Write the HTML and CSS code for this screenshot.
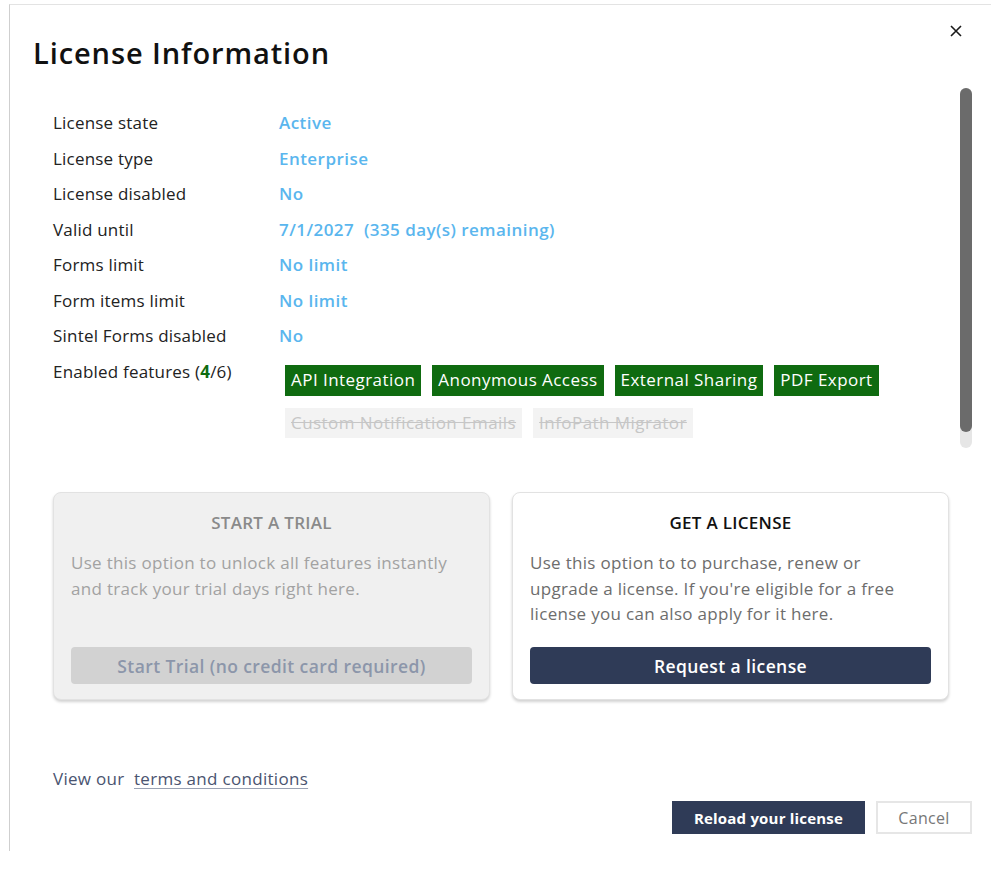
FILE: index.html
```html
<!DOCTYPE html>
<html lang="en">
<head>
  <meta charset="UTF-8">
  <title>License Information</title>
  <link rel="stylesheet" href="styles.css">
</head>
<body>
  <div class="dialog">
    <div class="dialog-header">
      <h1 class="dialog-title">License Information</h1>
      <button class="btn-close" title="Close">
        <svg width="12" height="12" viewBox="0 0 12 12"><path d="M1 1L11 11M11 1L1 11" stroke="#1a1a1a" stroke-width="1.6"/></svg>
      </button>
    </div>

    <div class="scroll-area">
      <div class="info-grid">
        <div class="info-label">License state</div>
        <div class="info-value">Active</div>
        <div class="info-label">License type</div>
        <div class="info-value">Enterprise</div>
        <div class="info-label">License disabled</div>
        <div class="info-value">No</div>
        <div class="info-label">Valid until</div>
        <div class="info-value">7/1/2027&nbsp; (335 day(s) remaining)</div>
        <div class="info-label">Forms limit</div>
        <div class="info-value">No limit</div>
        <div class="info-label">Form items limit</div>
        <div class="info-value">No limit</div>
        <div class="info-label">Sintel Forms disabled</div>
        <div class="info-value">No</div>
        <div class="info-label">Enabled features (<b class="count">4</b>/6)</div>
        <div class="features">
          <span class="tag tag-on">API Integration</span>
          <span class="tag tag-on">Anonymous Access</span>
          <span class="tag tag-on">External Sharing</span>
          <span class="tag tag-on">PDF Export</span>
          <span class="tag tag-off">Custom Notification Emails</span>
          <span class="tag tag-off">InfoPath Migrator</span>
        </div>
      </div>
      <div class="scrollbar">
        <div class="scroll-thumb"></div>
      </div>
    </div>

    <div class="options">
      <div class="option-card disabled">
        <div class="card-title">START A TRIAL</div>
        <p class="card-text">Use this option to unlock all features instantly and track your trial days right here.</p>
        <button class="card-btn btn-grey">Start Trial (no credit card required)</button>
      </div>
      <div class="option-card">
        <div class="card-title">GET A LICENSE</div>
        <p class="card-text">Use this option to to purchase, renew or upgrade a license. If you're eligible for a free license you can also apply for it here.</p>
        <button class="card-btn btn-navy">Request a license</button>
      </div>
    </div>

    <div class="terms">View our&nbsp; <a href="#">terms and conditions</a></div>

    <div class="dialog-footer">
      <button class="footer-btn btn-reload">Reload your license</button>
      <button class="footer-btn btn-cancel">Cancel</button>
    </div>
  </div>
</body>
</html>
```

FILE: styles.css
```css
* {
  margin: 0;
  padding: 0;
  box-sizing: border-box;
}

body {
  font-family: "Open Sans", "Noto Sans", sans-serif;
  background: #fff;
  color: #222;
}

.dialog {
  margin: 4px 0 0 9px;
  width: 982px;
  height: 847px;
  border-left: 1px solid #cfcfcf;
  border-top: 1px solid #e3e3e3;
  display: flex;
  flex-direction: column;
}

.dialog-header {
  display: flex;
  justify-content: space-between;
  align-items: flex-start;
  padding: 28px 29px 0 23px;
  height: 83px;
}

.dialog-title {
  font-size: 29px;
  font-weight: 600;
  color: #111;
  letter-spacing: 0.9px;
}

.btn-close {
  background: none;
  border: none;
  margin-top: -8px;
  cursor: pointer;
}

.scroll-area {
  display: flex;
  justify-content: space-between;
  height: 362px;
  padding-left: 43px;
}

.info-grid {
  display: grid;
  grid-template-columns: 226px 1fr;
  grid-auto-rows: 35.5px;
  padding-top: 17px;
  font-size: 17px;
  line-height: 35.5px;
}

.info-label {
  color: #222;
  letter-spacing: 0.2px;
}

.count {
  color: #0f6b10;
  font-weight: 700;
}

.info-value {
  color: #5ab6ee;
  font-weight: 600;
  letter-spacing: 0.45px;
}

.features {
  display: flex;
  flex-wrap: wrap;
  gap: 12px 11px;
  width: 620px;
  padding: 11px 0 0 6px;
  line-height: normal;
}

.tag {
  font-size: 17px;
  padding: 3px 6px;
  height: 31px;
  letter-spacing: 0.45px;
}

.tag-on {
  background: #0f6b10;
  color: #fff;
}

.tag-off {
  background: #f3f3f3;
  color: #c6c6c6;
  text-decoration: line-through;
  height: 30px;
}

.scrollbar {
  width: 12px;
  margin-right: 19px;
  background: #e6e6e6;
  border-radius: 6px;
  height: 360px;
}

.scroll-thumb {
  height: 344px;
  background: #6b6b6b;
  border-radius: 6px;
}

.options {
  display: grid;
  grid-template-columns: 437px 437px;
  gap: 22px;
  margin: 42px 0 0 43px;
}

.option-card {
  height: 208px;
  display: flex;
  flex-direction: column;
  padding: 19px 17px 15px;
  border: 1px solid #e2e2e2;
  border-radius: 8px;
  box-shadow: 0 2px 3px rgba(0, 0, 0, 0.18);
  background: #fff;
}

.option-card.disabled {
  background: #f0f0f0;
}

.card-title {
  text-align: center;
  font-size: 17px;
  font-weight: 600;
  line-height: 22px;
  color: #111;
  letter-spacing: 0.3px;
}

.disabled .card-title {
  color: #8a8a8a;
}

.card-text {
  margin-top: 16px;
  font-size: 17px;
  line-height: 25.5px;
  color: #6d6d6d;
  letter-spacing: 0.3px;
}

.disabled .card-text {
  color: #a2a2a2;
}

.card-btn {
  margin-top: auto;
  height: 37px;
  border: none;
  border-radius: 4px;
  font-family: inherit;
  font-size: 17.5px;
  font-weight: 600;
  letter-spacing: 0.4px;
}

.btn-grey {
  background: #d2d2d2;
  color: #8c96aa;
}

.btn-navy {
  background: #2f3b57;
  color: #fff;
}

.terms {
  margin: 67px 0 0 43px;
  font-size: 17px;
  color: #4a5470;
  letter-spacing: 0.3px;
}

.terms a {
  color: #4a5470;
  text-decoration-color: #9aa2b4;
  text-underline-offset: 3px;
}

.dialog-footer {
  display: flex;
  justify-content: flex-end;
  gap: 11px;
  margin-top: 11px;
  padding-right: 19px;
}

.footer-btn {
  height: 33px;
  font-family: inherit;
  font-size: 15px;
  letter-spacing: 0.2px;
}

.btn-reload {
  width: 193px;
  background: #2f3b57;
  color: #fff;
  font-weight: 700;
  border: 1px solid #2f3b57;
}

.btn-cancel {
  width: 96px;
  background: #fff;
  color: #777;
  font-size: 16px;
  letter-spacing: 0.3px;
  border: 2px solid #e6e6e6;
}
```
